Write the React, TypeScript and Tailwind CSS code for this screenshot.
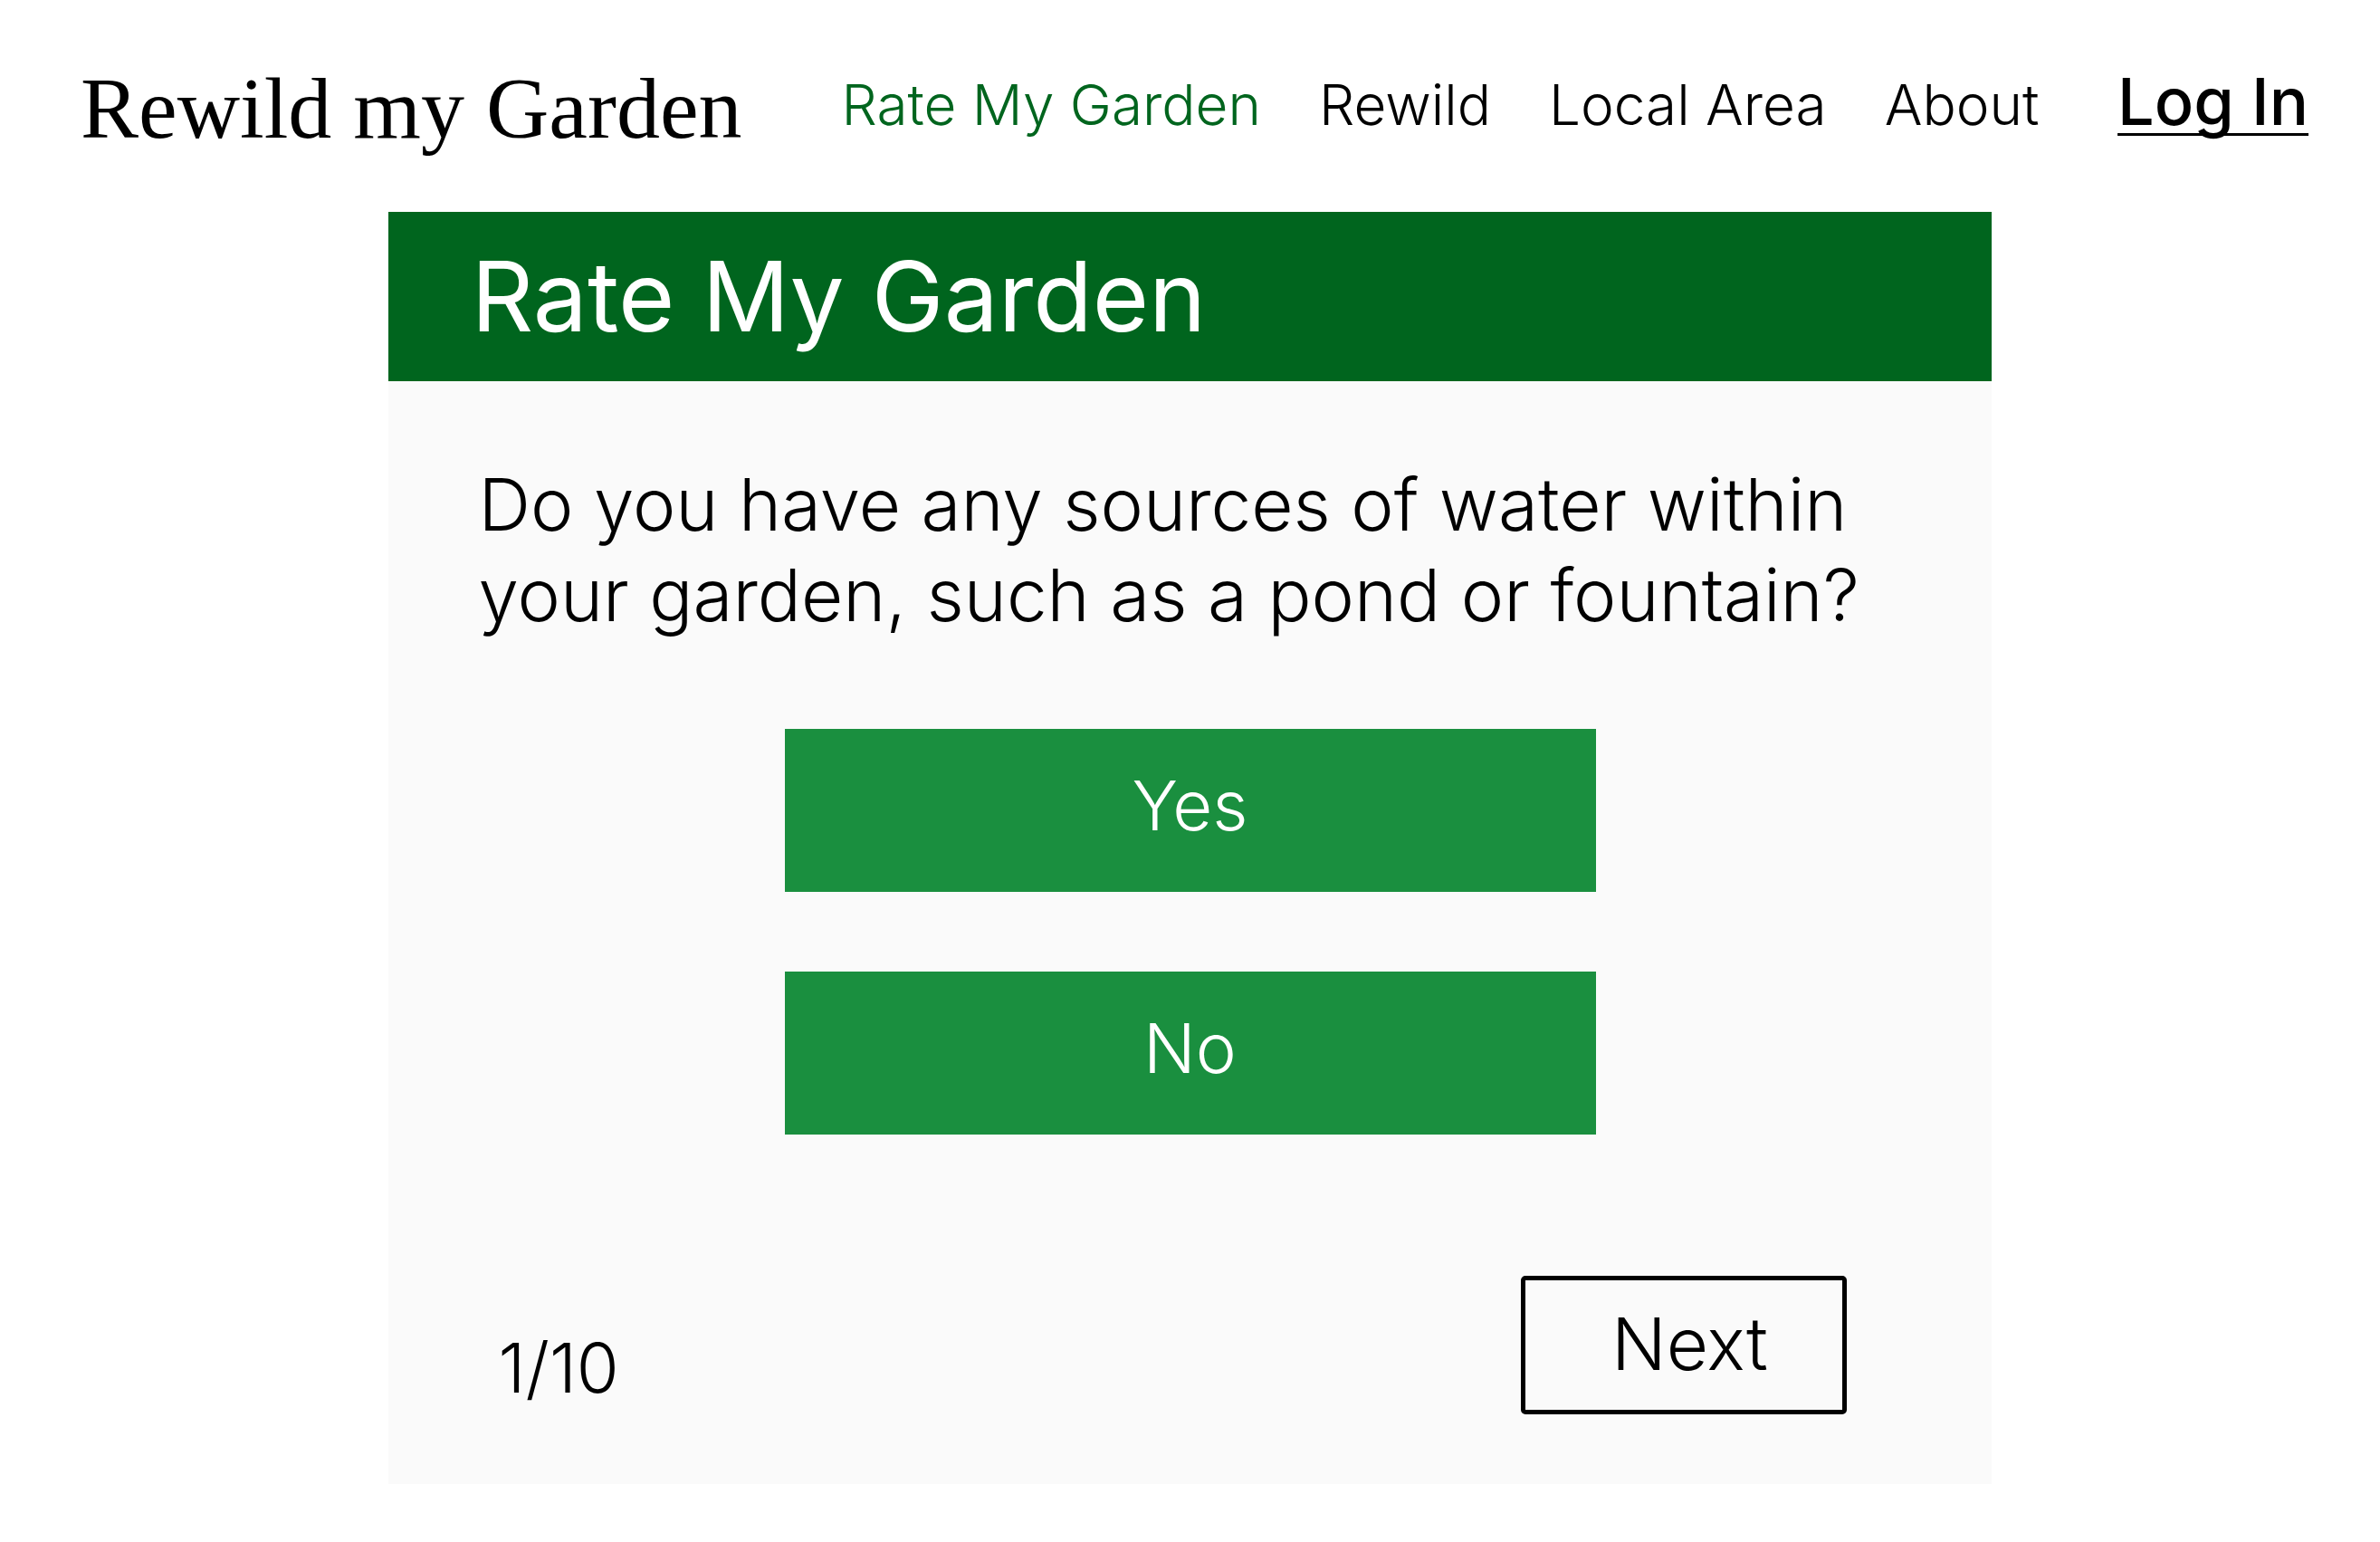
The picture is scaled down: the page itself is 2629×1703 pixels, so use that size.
const links = [
  { label: 'Rate My Garden', active: true },
  { label: 'Rewild', active: false },
  { label: 'Local Area', active: false },
  { label: 'About', active: false },
];

const answers = ['Yes', 'No'];

function Header() {
  return (
    <header className="flex items-start pt-[60px] pr-[79px] pl-[89px] whitespace-nowrap">
      <a href="#home" className="font-['Liberation_Serif',serif] text-[96px] leading-[120px]">
        Rewild my Garden
      </a>
      <nav aria-label="Main" className="ml-[110px] flex grow items-baseline gap-[64px] pt-[12px]">
        {links.map((link) => (
          <a
            key={link.label}
            href="#page"
            aria-current={link.active ? 'page' : undefined}
            className={
              link.active
                ? 'text-[62px] leading-[80px] font-light text-[#00651e]'
                : 'text-[62px] leading-[80px] font-light'
            }
          >
            {link.label}
          </a>
        ))}
        <a
          href="#login"
          className="ml-auto text-[72px] leading-[80px] font-medium underline decoration-[3px] underline-offset-[9px] [text-decoration-skip-ink:none]"
        >
          Log In
        </a>
      </nav>
    </header>
  );
}

export default function App() {
  return (
    <div className="min-h-screen bg-white pb-[64px] font-['Inter',sans-serif] text-black">
      <Header />
      <main className="mx-auto mt-[54px] w-[67.4%] bg-[#fafafa]">
        <h1 className="bg-[#00651e] px-[92px] pt-[33px] pb-[34px] text-[107px] leading-[120px] text-white">
          Rate My Garden
        </h1>
        <div className="px-[100px] pt-[86px] pb-[77px]">
          <p className="text-[80px] leading-[100px] font-light">
            Do you have any sources of water within
            <br />
            your garden, such as a pond or fountain?
          </p>
          <div className="mx-auto mt-[98px] flex w-[57%] flex-col gap-[88px]">
            {answers.map((answer) => (
              <button
                key={answer}
                type="button"
                className="bg-[#1a8f3f] pt-[34px] pb-[46px] text-[76px] leading-[100px] font-light text-white"
              >
                {answer}
              </button>
            ))}
          </div>
          <div className="mt-[156px] flex items-end justify-between pr-[60px] pl-[22px]">
            <span className="pb-[2px] text-[76px] leading-[100px] font-light">1/10</span>
            <button
              type="button"
              className="w-[360px] rounded-[5px] border-5 border-black pt-[20px] pb-[23px] pl-[12px] text-[80px] leading-[100px] font-light"
            >
              Next
            </button>
          </div>
        </div>
      </main>
    </div>
  );
}
